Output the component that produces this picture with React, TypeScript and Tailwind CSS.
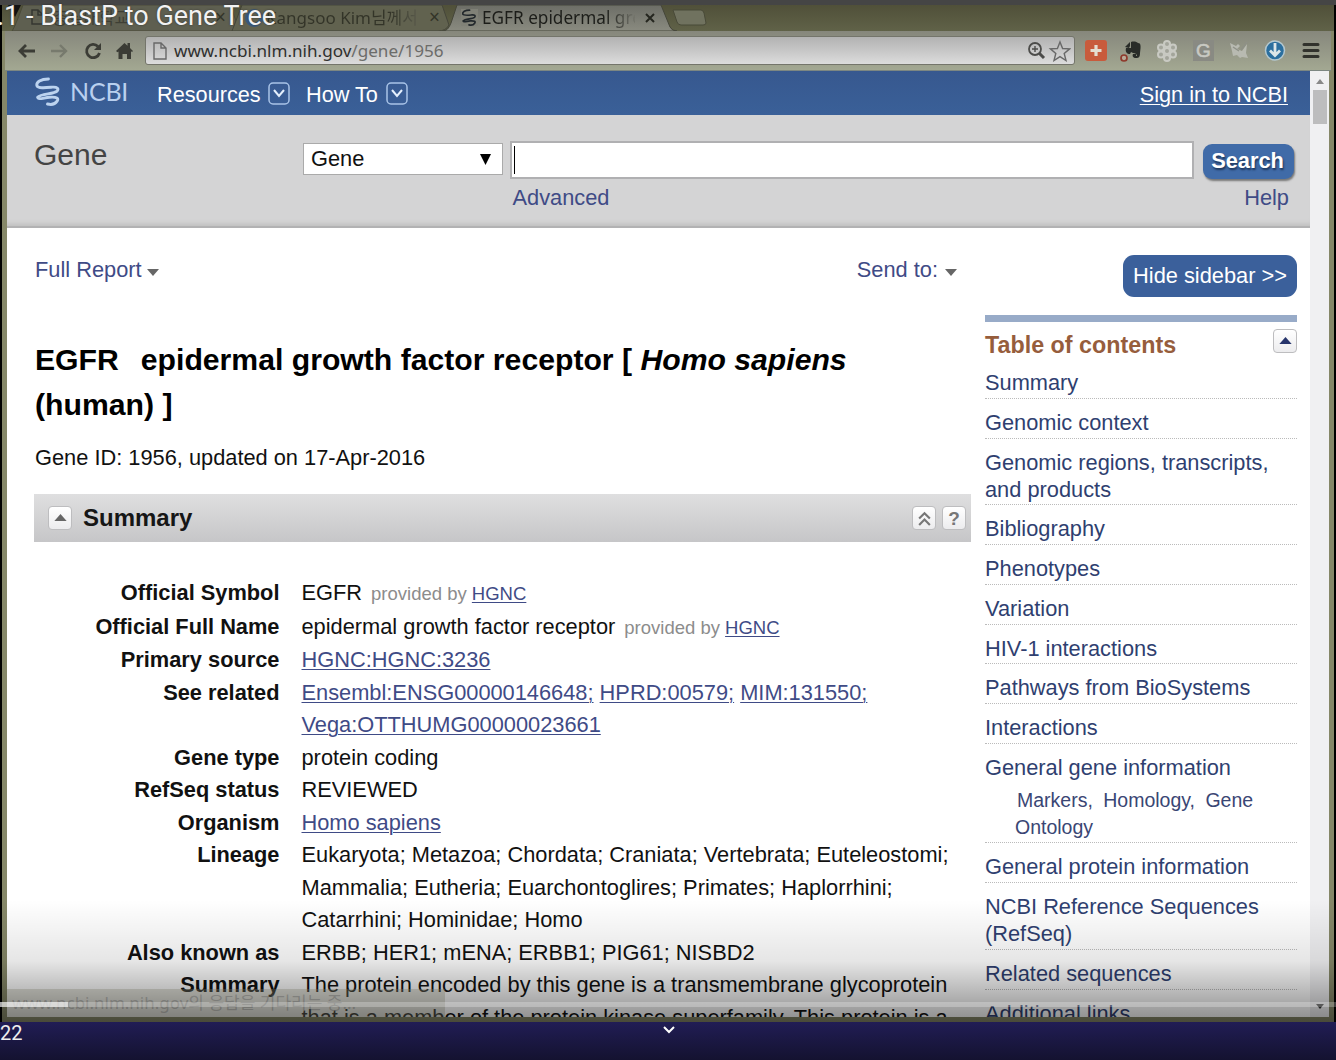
import type { ReactNode } from "react";

const link = "text-[#3f4b86] underline underline-offset-[2px] decoration-1";

function Helix({ className }: { className: string }) {
  return (
    <svg viewBox="0 0 26 30" className={className} fill="none" stroke="currentColor" strokeLinecap="round">
      <path d="M14 2C6 2 1 5 2 9C3 12 12 11 18 10.500C23 10 25 12 23 14.500C20 18 6 17 3 21" strokeWidth="3" />
      <path d="M3 21C3 24 9 21.500 15 21C23 20.500 25 22 23 25C21 28 17 29 13 28" strokeWidth="3" />
    </svg>
  );
}

function NavBox() {
  return (
    <svg viewBox="0 0 22 23" className="h-[23px] w-[22px]" fill="none" stroke="#a9c4e8">
      <rect x="1" y="1" width="20" height="21" rx="4" strokeWidth="1.500" />
      <path d="M6 8l5 6 5-6" strokeWidth="2" stroke="#e4effc" />
    </svg>
  );
}

function SmallButton({ children }: { children: ReactNode }) {
  return (
    <span className="flex h-6 w-6 shrink-0 items-center justify-center rounded-[4px] border border-[#bdbdbf] bg-gradient-to-b from-white to-[#ececee]">
      {children}
    </span>
  );
}

function Up({ color }: { color: string }) {
  return (
    <svg viewBox="0 0 14 8" className="mb-[2px] h-[7px] w-[13px]">
      <path d="M7 0l7 8H0z" fill={color} />
    </svg>
  );
}

function Down() {
  return (
    <svg viewBox="0 0 12 7" className="h-[7px] w-3">
      <path d="M0 0h12L6 7z" fill="#666" />
    </svg>
  );
}

function TabStrip() {
  return (
    <div className="relative h-[26px] shrink-0 overflow-hidden bg-gradient-to-b from-[#505039] to-[#606248] font-['Noto_Sans','Noto_Sans_CJK_KR',sans-serif] text-[17px] leading-[25px]">
      <svg className="absolute left-0 top-0 h-[26px] w-[720px]" viewBox="0 0 720 26">
        <defs>
          <linearGradient id="tab" x1="0" y1="0" x2="0" y2="1">
            <stop offset="0" stopColor="#6c6d66" />
            <stop offset="1" stopColor="#8a8b80" />
          </linearGradient>
        </defs>
        <path d="M6 0H19L13 12z" fill="#111" />
        <path d="M10 26Q13 22 21 0H228L238 26z" fill="#5e5f50" stroke="#4a4b38" />
        <path d="M230 26L240 0H440L447 20Q444 26 436 26z" fill="#61624f" stroke="#45463a" />
        <path d="M441 26Q446 26 449 18L455 0H659L668 22Q670 26 675 26z" fill="url(#tab)" stroke="#45463a" />
        <path d="M671 5H699Q701 5 702 8L704 18Q704 20 701 20H679Q676 20 675 17z" fill="#70725f" stroke="#494a38" />
        <path d="M30 5h6l5 5v9H30zM36 5v5h5" fill="none" stroke="#363730" strokeWidth="1.500" />
      </svg>
      <div className="relative flex h-full whitespace-pre text-[#333428]">
        <span className="ml-[50px] w-[163px] text-[#3e3f35]">충실대학교</span>
        <span className="w-[30px] text-[19px]">×</span>
        <span className="mt-[4px] h-[18px] w-[18px] rounded-full border-4 border-[#3a5a7d]" />
        <span className="ml-[3px] w-[155px] overflow-hidden bg-gradient-to-r from-[#333428] from-80% to-[#5e5f50] bg-clip-text text-transparent">Kangsoo Kim님께서</span>
        <span className="ml-[8px] w-[32px] text-[19px]">×</span>
        <span className="mt-[4px] h-[17px] w-[17px] bg-[#808177] text-[#22282c]">
          <Helix className="h-[17px] w-[16px]" />
        </span>
        <span className="ml-[4px] w-[153px] overflow-hidden bg-gradient-to-r from-[#1c1d19] from-80% to-[#74756c] bg-clip-text text-[17.200px] text-transparent">EGFR epidermal gro</span>
        <svg viewBox="0 0 10 10" className="ml-[10px] mt-[8px] h-[10px] w-[10px]" stroke="#25261f" strokeWidth="2"><path d="M1 1l8 8M9 1l-8 8" /></svg>
      </div>
    </div>
  );
}

function Toolbar() {
  return (
    <div className="mx-[3px] flex h-10 shrink-0 items-center border-b border-[#7d8782] bg-gradient-to-b from-[#86877c] to-[#a3a892]">
      <svg viewBox="0 0 118 22" className="ml-[11px] h-[22px] w-[118px] shrink-0" fill="none" stroke="#3b3c35" strokeWidth="2.800">
        <path d="M19 11H5M10 5l-6 6 6 6" />
        <path d="M35 11h14M44 5l6 6-6 6" stroke="#777a6d" strokeWidth="2.400" />
        <path d="M82 6.500A6.600 6.600 0 1 0 83.500 13" />
        <path d="M85 3v7h-7z" fill="#3b3c35" stroke="none" />
        <path d="M100 11l8.500-8 3 2.800V3h2.500v5l3 3-1 1-1-.8V19h-4v-5h-4.500v5h-4v-7.500l-1 .8z" fill="#3b3c35" stroke="none" />
      </svg>
      <div className="ml-[11px] flex h-[29px] w-[930px] shrink-0 items-center rounded-[3px] border border-[#74756b] bg-gradient-to-b from-[#b2b2b2] to-[#dcdcdc] font-['Noto_Sans',sans-serif] text-[17.100px]">
        <svg viewBox="0 0 14 18" className="ml-[7px] h-[18px] w-[14px]" fill="none" stroke="#686868" strokeWidth="1.400">
          <path d="M1 1h7l5 5v11H1zM8 1v5h5" />
        </svg>
        <span className="ml-[7px] text-[#30302e]">www.ncbi.nlm.nih.gov<span className="text-[#6c6c6a]">/gene/1956</span></span>
        <svg viewBox="0 0 46 22" className="ml-auto mr-[3px] h-[22px] w-[46px]" fill="none" stroke="#4c4c4a" strokeWidth="1.800">
          <circle cx="10" cy="9" r="6" />
          <path d="M14.500 13.500l4.500 4.500" strokeWidth="3" />
          <path d="M7 9h6M10 6v6" strokeWidth="1.400" />
          <path d="M35 2l2.600 6.500 7 .4-5.400 4.600 1.800 7-6-3.900-6 3.900 1.800-7-5.400-4.600 7-.4z" strokeWidth="1.400" stroke="#686868" />
        </svg>
      </div>
      <svg viewBox="0 0 240 24" className="ml-[10px] h-6 w-[240px] shrink-0">
        <rect x="0" y="1" width="22" height="21" rx="3" fill="#c85b3c" />
        <path d="M11 6v11M5.500 11.500h11" stroke="#e4ddd0" strokeWidth="3.200" />
        <path d="M40 8l5-5v4l-1 2zM46 3c3-1 6 0 7 1 3 0 3 3 2 10 0 4-1 5-4 5s-4-2-3-4h3v2h1c0-2-2-3-4-3l-2-1-1 2c-3 0-5-2-4-6h5z" fill="#292c28" />
        <circle cx="39" cy="19" r="3" fill="#b8aa98" stroke="#8e3a2c" strokeWidth="1.700" />
        <g fill="#a3a59b" stroke="#c9cac3" strokeWidth="2">
          <circle cx="82" cy="5" r="3" /><circle cx="88" cy="8.500" r="3" /><circle cx="88" cy="15.500" r="3" /><circle cx="82" cy="19" r="3" /><circle cx="76" cy="15.500" r="3" /><circle cx="76" cy="8.500" r="3" /><circle cx="82" cy="12" r="3" />
        </g>
        <rect x="108" y="1" width="21" height="21" fill="#898a83" />
        <text x="111" y="18" fontFamily="Liberation Sans" fontSize="19" fill="#c8c9c2" stroke="#c8c9c2" strokeWidth=".6">G</text>
        <path d="M145 4l6 3 2-2 2 2-3 3 5 2 5-7-1 9 2 5-6-1-2 1-3-3-4 1-1-5z" fill="#b8bab1" />
        <path d="M156 11l6-8M148 8l6 4" stroke="#8e9187" strokeWidth="1.400" />
        <circle cx="190" cy="11.500" r="9.500" fill="#2b6f9f" stroke="#b4c8cf" strokeWidth="1.500" />
        <path d="M190 4v12M185 11.500l5 5 5-5" fill="none" stroke="#dce6e8" strokeWidth="2.800" />
        <path d="M219 5.500h14M219 11.500h14M219 17.500h14" stroke="#31322c" strokeWidth="3" strokeLinecap="round" />
      </svg>
    </div>
  );
}

function SiteHeader() {
  return (
    <>
      <div className="flex h-11 shrink-0 items-center bg-gradient-to-b from-[#37588f] to-[#3a6098] text-[21.700px] text-white">
        <Helix className="mb-[3px] ml-[28px] h-[29px] w-[25px] text-[#bcd3ef]" />
        <span className="mb-[2px] ml-[10px] w-[87px] font-['Lato',sans-serif] text-[25px] tracking-[-0.200px] text-[#b9d0ef]">NCBI</span>
        <span className="mt-[4px] w-[111px]">Resources</span>
        <NavBox />
        <span className="ml-[16px] mt-[4px] w-[80px]">How To</span>
        <NavBox />
        <span className="ml-auto mr-[22px] mt-[4px] underline decoration-1 underline-offset-[2px]">Sign in to NCBI</span>
      </div>
      <div className="flex h-[113px] shrink-0 items-start border-b-2 border-[#b2b2b3] bg-[#d4d4d5] shadow-[inset_0_-6px_5px_-4px_#bebebe]">
        <h2 className="ml-[27px] mt-[22px] w-[269px] text-[30px] leading-[36px] text-[#444]">Gene</h2>
        <div className="mt-[28px] flex h-8 w-[200px] items-center justify-between border border-[#aaa] bg-white pl-[7px] pr-[11px]">
          Gene
          <svg viewBox="0 0 12 12" className="h-[11px] w-[11px]"><path d="M0 0h12L6 12z" /></svg>
        </div>
        <div className="ml-[7px] mt-[26px] w-[684px]">
          <div className="flex h-[38px] items-center border-2 border-[#b0b0b2] bg-white">
            <span className="ml-[2px] h-7 w-px bg-black" />
          </div>
          <div className="mt-[5px] pl-[2.500px] leading-7 text-[#3f4b86]">Advanced</div>
        </div>
        <div className="ml-[9px] mt-[29px] w-[91px]">
          <div className="flex h-[35px] items-center justify-center rounded-[9px] bg-[#406ba8] pr-[2px] font-bold text-white shadow-[1px_2px_2px_#777] [text-shadow:1px_2px_2px_#1d355a]">Search</div>
          <div className="mt-[5px] pr-[5px] text-right leading-7 text-[#3f4b86]">Help</div>
        </div>
      </div>
    </>
  );
}

const provided = (
  <span className="ml-[9px] text-[18.500px] text-[#8c8c8c]">
    provided by <span className={link}>HGNC</span>
  </span>
);

const rows: { label: string; lines: ReactNode[] }[] = [
  { label: "Official Symbol", lines: [<>EGFR{provided}</>] },
  { label: "Official Full Name", lines: [<>epidermal growth factor receptor{provided}</>] },
  { label: "Primary source", lines: [<span className={link}>HGNC:HGNC:3236</span>] },
  {
    label: "See related",
    lines: [
      <><span className={link}>Ensembl:ENSG00000146648;</span> <span className={link}>HPRD:00579;</span> <span className={link}>MIM:131550;</span></>,
      <span className={link}>Vega:OTTHUMG00000023661</span>,
    ],
  },
  { label: "Gene type", lines: ["protein coding"] },
  { label: "RefSeq status", lines: ["REVIEWED"] },
  { label: "Organism", lines: [<span className={link}>Homo sapiens</span>] },
  {
    label: "Lineage",
    lines: [
      "Eukaryota; Metazoa; Chordata; Craniata; Vertebrata; Euteleostomi;",
      "Mammalia; Eutheria; Euarchontoglires; Primates; Haplorrhini;",
      "Catarrhini; Hominidae; Homo",
    ],
  },
  { label: "Also known as", lines: ["ERBB; HER1; mENA; ERBB1; PIG61; NISBD2"] },
  {
    label: "Summary",
    lines: [
      "The protein encoded by this gene is a transmembrane glycoprotein",
      "that is a member of the protein kinase superfamily. This protein is a",
    ],
  },
];

function MainColumn() {
  return (
    <main className="w-[937px] shrink-0 whitespace-nowrap">
      <div className="mt-[27px] flex h-[30px] items-center text-[#3f4b86]">
        <span className="mr-[5px]">Full Report</span>
        <span className="mt-[5px]"><Down /></span>
        <span className="ml-auto mr-[7px]">Send to:</span>
        <span className="mr-[15px] mt-[5px]"><Down /></span>
      </div>
      <h1 className="mt-[52px] text-[30.180px] font-bold leading-[45px] text-black">
        EGFR<span className="ml-[22px]">epidermal growth factor receptor [ <i>Homo sapiens</i></span>
        <br />
        (human) ]
      </h1>
      <p className="mt-[16px] leading-[30px]">Gene ID: 1956, updated on 17-Apr-2016</p>
      <div className="-ml-px mr-px mt-[21px] flex h-12 items-center bg-gradient-to-b from-[#dfdfe0] to-[#c6c6c8] pl-[14px] pr-[5px]">
        <SmallButton><Up color="#666" /></SmallButton>
        <h2 className="ml-[11px] mr-auto text-[24px] font-bold text-[#161616]">Summary</h2>
        <SmallButton>
          <svg viewBox="0 0 14 14" className="h-[15px] w-[15px]" fill="none" stroke="#777" strokeWidth="2"><path d="M2 7l5-5 5 5M2 13l5-5 5 5" /></svg>
        </SmallButton>
        <span className="w-[6px]" />
        <SmallButton><b className="text-[19px] leading-none text-[#777]">?</b></SmallButton>
      </div>
      <dl className="mt-[35px] leading-[32.500px]">
        {rows.map((row) => (
          <div key={row.label} className="flex">
            <dt className="w-[244.500px] text-right font-bold">{row.label}</dt>
            <dd className="ml-[22px]">
              {row.lines.map((line, i) => <div key={i}>{line}</div>)}
            </dd>
          </div>
        ))}
      </dl>
    </main>
  );
}

const contents: string[][] = [
  ["Genomic context"],
  ["Genomic regions, transcripts,", "and products"],
  ["Bibliography"],
  ["Phenotypes"],
  ["Variation"],
  ["HIV-1 interactions"],
  ["Pathways from BioSystems"],
  ["Interactions"],
  ["General gene information"],
  ["General protein information"],
  ["NCBI Reference Sequences", "(RefSeq)"],
  ["Related sequences"],
  ["Additional links"],
];

function Sidebar() {
  return (
    <aside className="ml-[13px] w-[312px] shrink-0 whitespace-nowrap text-[#2f3f70]">
      <div className="ml-auto mt-[27px] flex h-[42px] w-[174px] items-center justify-center rounded-[11px] bg-[#3b609b] pt-px text-white">Hide sidebar &gt;&gt;</div>
      <div className="mt-[18px] h-[7px] bg-[#98abc8]" />
      <div className="mt-[7px] flex h-[41px] justify-between">
        <h3 className="mt-px text-[23.300px] font-bold leading-[30px] text-[#965d3c]">Table of contents</h3>
        <SmallButton><Up color="#26346b" /></SmallButton>
      </div>
      <div className="h-[29px] border-b border-dotted border-[#bbb] leading-[25.500px]">Summary</div>
      {contents.map((lines) => (
        <div key={lines[0]} className="border-b border-dotted border-[#bbb] pb-[0.900px] pt-[11px] leading-[26.850px]">
          {lines.map((line) => <div key={line}>{line}</div>)}
          {lines[0] === "General gene information" && (
            <div className="mt-[5px] pb-px pl-[30px] text-[19.500px] leading-[27px] text-[#3a4674]">
              <div className="pl-[2px] [word-spacing:5px]">Markers, Homology, Gene</div>
              <div>Ontology</div>
            </div>
          )}
        </div>
      ))}
    </aside>
  );
}

export default function App() {
  return (
    <div className="relative flex h-[1060px] w-[1336px] flex-col overflow-hidden bg-[#454545] font-['Liberation_Sans',Arial,sans-serif] text-[21.800px] text-[#111]">
      <div className="h-[5px] shrink-0" />
      <div className="flex h-[1017px] shrink-0 flex-col overflow-hidden border-x-2 border-black bg-[#858768]">
        <TabStrip />
        <Toolbar />
        <div className="mx-[5px] flex h-[946px] shrink-0 overflow-hidden bg-white">
          <div className="flex w-[1303px] shrink-0 flex-col overflow-hidden">
            <SiteHeader />
            <div className="flex pl-[28px]">
              <MainColumn />
              <Sidebar />
            </div>
          </div>
          <div className="flex flex-1 flex-col items-center bg-[#f0f0f2]">
            <span className="mt-[8px] flex h-[11px] items-start"><svg viewBox="0 0 8 5" className="h-[5px] w-2"><path d="M0 5l4-5 4 5z" fill="#888" /></svg></span>
            <span className="h-[34px] w-[14px] bg-[#bdbdbe]" />
            <svg viewBox="0 0 8 5" className="mb-[8px] mt-auto h-[5px] w-2"><path d="M0 0h8L4 5z" fill="#333" /></svg>
          </div>
        </div>
        <div className="h-[5px] shrink-0 bg-[#858768]" />
      </div>
      <div className="flex flex-1 items-start justify-between bg-gradient-to-b from-[#211d55] to-[#141230] font-['Roboto',sans-serif] text-[20px] leading-[23px] text-[#eee]">
        <span>22</span>
        <svg viewBox="0 0 12 8" className="mr-[21px] mt-[4px] h-2 w-3" fill="none" stroke="#fff" strokeWidth="2"><path d="M1 1l5 5 5-5" /></svg>
        <span />
      </div>

      <div className="absolute left-[7px] top-[989px] h-[28px] w-[438px] bg-[#a5a790]/35 pl-[5px] font-['Noto_Sans','Noto_Sans_CJK_KR',sans-serif] text-[17px] leading-[28px] text-[#777]/40">
        www.ncbi.nlm.nih.gov의 응답을 기다리는 중...
      </div>
      <div className="absolute left-0 top-[900px] h-[122px] w-full bg-gradient-to-b from-transparent via-black/10 to-black/45" />
      <div className="absolute left-0 top-[1002px] flex h-[5px] w-full bg-white/25">
        <span className="w-[68px] bg-white/55" />
      </div>
      <div className="absolute left-[-3px] top-0 whitespace-pre font-['Roboto',sans-serif] text-[27px] leading-[32px] text-[#f2f2f2] [text-shadow:0_0_2px_#333]">.1 - BlastP to Gene Tree</div>
    </div>
  );
}
